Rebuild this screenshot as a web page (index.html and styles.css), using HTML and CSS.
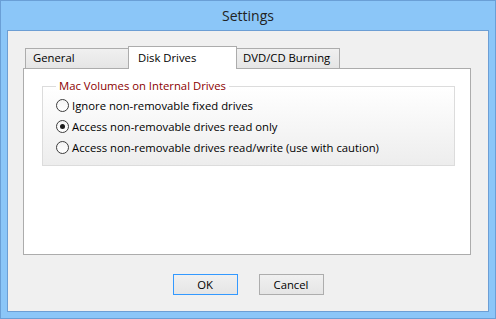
FILE: index.html
```html
<!DOCTYPE html>
<html>
<head>
<meta charset="utf-8">
<title>Settings</title>
<link rel="stylesheet" href="styles.css">
</head>
<body>
<div class="window">
  <div class="titlebar">Settings</div>
  <div class="client">
    <div class="tabs">
      <div class="tab tab-general">General</div>
      <div class="tab tab-disk active">Disk Drives</div>
      <div class="tab tab-dvd">DVD/CD Burning</div>
    </div>
    <div class="panel">
      <fieldset class="group">
        <legend>Mac Volumes on Internal Drives</legend>
        <div class="option"><span class="radio"></span><span>Ignore non-removable fixed drives</span></div>
        <div class="option"><span class="radio checked"></span><span>Access non-removable drives read only</span></div>
        <div class="option"><span class="radio"></span><span>Access non-removable drives read/write (use with caution)</span></div>
      </fieldset>
    </div>
    <div class="buttons">
      <div class="btn default">OK</div>
      <div class="btn">Cancel</div>
    </div>
  </div>
</div>
</body>
</html>
```

FILE: styles.css
```css
html, body {
  margin: 0;
  padding: 0;
}
body {
  font-family: "Open Sans", "Noto Sans", sans-serif;
  color: #000;
}
.window {
  width: 496px;
  height: 319px;
  box-sizing: border-box;
  border: 1px solid #6a9fd6;
  background: #8bc6f8;
  padding: 0 6px 6px;
  display: flex;
  flex-direction: column;
}
.titlebar {
  height: 29px;
  display: flex;
  align-items: center;
  justify-content: center;
  font-size: 14px;
  color: #222;
}
.client {
  flex: 1;
  border: 1px solid #6c9ed4;
  background: #f0f0f0;
  padding: 15px 17px 16px 15px;
  display: flex;
  flex-direction: column;
}
.tabs {
  display: flex;
  align-items: flex-end;
  height: 22px;
  padding-left: 2px;
  position: relative;
  z-index: 1;
}
.tab {
  box-sizing: border-box;
  height: 20px;
  border: 1px solid #acacac;
  border-bottom: none;
  background: linear-gradient(#f0f0f0, #e5e5e5);
  font-size: 11.3px;
  line-height: 18px;
  white-space: nowrap;
}
.tab-general {
  width: 104px;
  padding-left: 7px;
}
.tab-disk {
  width: 109px;
  margin-left: -1px;
  padding-left: 9px;
}
.tab-dvd {
  width: 104px;
  margin-left: -1px;
  padding-left: 6px;
}
.tab.active {
  height: 23px;
  margin-bottom: -1px;
  padding-top: 2px;
  background: #fff;
  position: relative;
  z-index: 2;
}
.panel {
  box-sizing: border-box;
  height: 187px;
  border: 1px solid #acacac;
  background: #fff;
  padding-top: 9px;
}
.group {
  margin: 0 15px 0 18px;
  padding: 1px 0 7px 13px;
  border: 1px solid #dcdcdc;
  background: linear-gradient(#ffffff, #ededed);
}
.group legend {
  padding: 0 3px;
  font-size: 11.3px;
  line-height: 16px;
  color: #8b0000;
}
.option {
  display: flex;
  align-items: center;
  gap: 3px;
  height: 21px;
  font-size: 11.3px;
  white-space: nowrap;
}
.radio {
  box-sizing: border-box;
  width: 13px;
  height: 13px;
  border: 1px solid #3c3c3c;
  border-radius: 50%;
  background: linear-gradient(#f4f4f4, #ffffff);
  display: flex;
  align-items: center;
  justify-content: center;
  flex: none;
}
.radio.checked::after {
  content: "";
  width: 5px;
  height: 5px;
  border-radius: 50%;
  background: #1a1a1a;
}
.buttons {
  margin-top: 19px;
  padding-left: 2px;
  display: flex;
  justify-content: center;
  gap: 21px;
}
.btn {
  box-sizing: border-box;
  width: 65px;
  height: 21px;
  border: 1px solid #adadad;
  background: linear-gradient(#f0f0f0, #e5e5e5);
  font-size: 11.3px;
  display: flex;
  align-items: center;
  justify-content: center;
}
.btn.default {
  border-color: #3399ff;
}
```
